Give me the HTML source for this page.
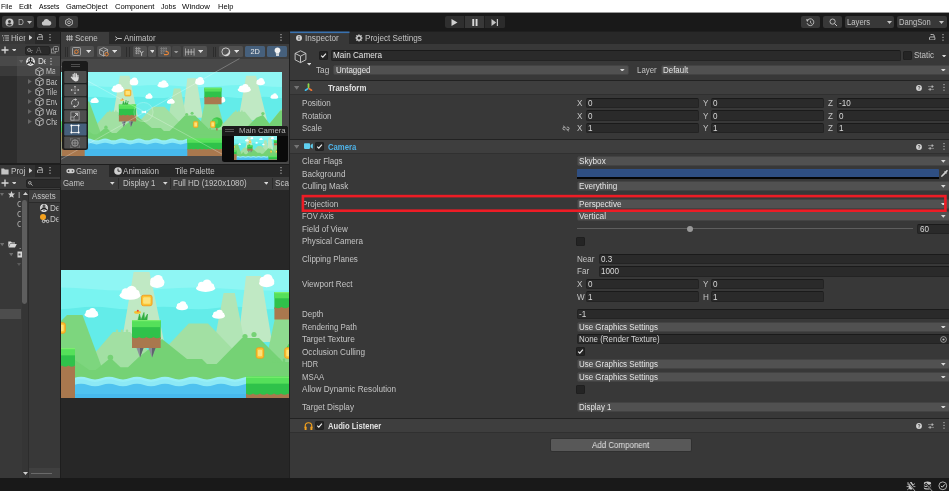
<!DOCTYPE html>
<html><head><meta charset="utf-8"><title>Unity</title>
<style>
html,body{margin:0;padding:0}
body{width:949px;height:491px;overflow:hidden;background:#383838;position:relative;font-family:"Liberation Sans",sans-serif;font-size:8.1px;color:#c4c4c4}
div,span,svg{position:absolute;display:block;box-sizing:border-box}
span{white-space:nowrap;line-height:10px}
.f{background:#2a2a2a;border:1px solid #232323;border-top-color:#1a1a1a;border-radius:2px}
.d{background:#515151;border:1px solid #434343;border-radius:2px}
</style></head><body><div id="app" style="left:0;top:0;width:949px;height:491px;will-change:transform">
<div style="left:0px;top:0px;width:949px;height:12px;background:#ffffff;"></div>
<span style="left:0.6px;top:2px;color:#000;font-size:7.6px;font-weight:400;transform:scaleX(0.923);transform-origin:0 0;">File</span>
<span style="left:19.2px;top:2px;color:#000;font-size:7.6px;font-weight:400;transform:scaleX(0.977);transform-origin:0 0;">Edit</span>
<span style="left:39px;top:2px;color:#000;font-size:7.6px;font-weight:400;transform:scaleX(0.894);transform-origin:0 0;">Assets</span>
<span style="left:66.4px;top:2px;color:#000;font-size:7.6px;font-weight:400;transform:scaleX(0.973);transform-origin:0 0;">GameObject</span>
<span style="left:114.8px;top:2px;color:#000;font-size:7.6px;font-weight:400;transform:scaleX(1.005);transform-origin:0 0;">Component</span>
<span style="left:161px;top:2px;color:#000;font-size:7.6px;font-weight:400;transform:scaleX(0.934);transform-origin:0 0;">Jobs</span>
<span style="left:182.3px;top:2px;color:#000;font-size:7.6px;font-weight:400;transform:scaleX(1.032);transform-origin:0 0;">Window</span>
<span style="left:217.5px;top:2px;color:#000;font-size:7.6px;font-weight:400;transform:scaleX(0.985);transform-origin:0 0;">Help</span>
<div style="left:0px;top:12px;width:949px;height:20px;background:#191919;"></div>
<div style="left:0px;top:12px;width:949px;height:1px;background:#9a9a9a;"></div>
<div style="left:2px;top:16px;width:32px;height:12px;background:#383838;border-radius:2px"></div>
<div style="left:37px;top:16px;width:19px;height:12px;background:#383838;border-radius:2px"></div>
<div style="left:59px;top:16px;width:19px;height:12px;background:#383838;border-radius:2px"></div>
<svg style="left:5px;top:18px;" width="9" height="9" viewBox="0 0 9 9"><circle cx="4.5" cy="4.5" r="4" fill="#c8c8c8"/><circle cx="4.5" cy="3.4" r="1.5" fill="#383838"/><path d="M1.9 7 Q4.5 4.2 7.1 7 Q4.5 8.6 1.9 7Z" fill="#383838"/></svg>
<span style="left:17.5px;top:17px;color:#b0b0b0;font-size:8.5px;font-weight:400;transform:scaleX(0.953);transform-origin:0 0;">D</span>
<svg style="left:27.0px;top:20.8px;" width="5" height="3" viewBox="0 0 5 3"><polygon points="0,0 5,0 2.5,3" fill="#c4c4c4"/></svg>
<svg style="left:41px;top:18px;" width="11" height="8" viewBox="0 0 11 8"><path d="M2.5 7.5 A2.2 2.2 0 0 1 2.6 3.2 A3 3 0 0 1 8.2 2.8 A2.4 2.4 0 0 1 8.6 7.5Z" fill="#c8c8c8"/></svg>
<svg style="left:64.5px;top:18.3px;" width="8" height="8.6" viewBox="0 0 8 8.6"><polygon points="4,0.6 7.3,2.4 7.3,6.2 4,8 0.7,6.2 0.7,2.4" fill="none" stroke="#c8c8c8" stroke-width="0.9"/><circle cx="4" cy="4.3" r="1.4" fill="none" stroke="#c8c8c8" stroke-width="0.8"/></svg>
<div style="left:445px;top:16px;width:59.5px;height:12px;background:#2f2f2f;border-radius:2px"></div>
<div style="left:464.8px;top:16px;width:19.4px;height:12px;background:#383838;"></div>
<div style="left:485px;top:16px;width:19.5px;height:12px;background:#2b2b2b;border-radius:0 2px 2px 0"></div>
<div style="left:464px;top:16px;width:0.8px;height:12px;background:#1e1e1e;"></div>
<div style="left:484.2px;top:16px;width:0.8px;height:12px;background:#1e1e1e;"></div>
<svg style="left:451px;top:18.5px;" width="7" height="7" viewBox="0 0 7 7"><polygon points="0.5,0 6.5,3.5 0.5,7" fill="#d0d0d0"/></svg>
<svg style="left:472px;top:18.5px;" width="6" height="7" viewBox="0 0 6 7"><rect x="0.3" y="0" width="1.9" height="7" fill="#d8d8d8"/><rect x="3.6" y="0" width="1.9" height="7" fill="#d8d8d8"/></svg>
<svg style="left:491px;top:18.5px;" width="8" height="7" viewBox="0 0 8 7"><polygon points="0.5,0 5.2,3.5 0.5,7" fill="#c4c4c4"/><rect x="5.8" y="0" width="1.2" height="7" fill="#c4c4c4"/></svg>
<div style="left:800.5px;top:16px;width:19px;height:12px;background:#383838;border-radius:2px"></div>
<div style="left:822.5px;top:16px;width:19.5px;height:12px;background:#383838;border-radius:2px"></div>
<div style="left:844.5px;top:16px;width:49.5px;height:12px;background:#383838;border-radius:2px"></div>
<div style="left:897px;top:16px;width:49.5px;height:12px;background:#383838;border-radius:2px"></div>
<svg style="left:806px;top:18px;" width="9" height="9" viewBox="0 0 9 9"><path d="M1.6 2.2 A3.4 3.4 0 1 1 1.1 5.2" fill="none" stroke="#c4c4c4" stroke-width="0.9"/><polygon points="0,1.2 3,1.6 1.2,3.9" fill="#c4c4c4"/><path d="M4.5 2.8 V4.7 L5.8 5.5" fill="none" stroke="#c4c4c4" stroke-width="0.8"/></svg>
<svg style="left:828.5px;top:18px;" width="9" height="9" viewBox="0 0 9 9"><circle cx="3.6" cy="3.6" r="2.6" fill="none" stroke="#c4c4c4" stroke-width="0.9"/><path d="M5.6 5.6 L8 8" stroke="#c4c4c4" stroke-width="1"/></svg>
<span style="left:847px;top:17px;color:#c4c4c4;font-size:8.5px;font-weight:400;transform:scaleX(0.909);transform-origin:0 0;">Layers</span>
<svg style="left:886.9px;top:20.8px;" width="5" height="3" viewBox="0 0 5 3"><polygon points="0,0 5,0 2.5,3" fill="#c4c4c4"/></svg>
<span style="left:899px;top:17px;color:#c4c4c4;font-size:8.5px;font-weight:400;transform:scaleX(0.892);transform-origin:0 0;">DangSon</span>
<svg style="left:938.5px;top:20.8px;" width="5" height="3" viewBox="0 0 5 3"><polygon points="0,0 5,0 2.5,3" fill="#c4c4c4"/></svg>
<div style="left:0px;top:31px;width:949px;height:1px;background:#1f1f1f;"></div>
<div style="left:0px;top:32px;width:60px;height:12px;background:#282828;"></div>
<div style="left:0px;top:32px;width:25.5px;height:12px;background:#383838;"></div>
<div style="left:25.2px;top:32px;width:10px;height:12px;background:#323232;"></div>
<svg style="left:1.5px;top:35px;" width="7" height="6" viewBox="0 0 7 6"><path d="M0 0.8H1.2M2.2 0.8H7M1 3H2.2M3.2 3H7M1 5.2H2.2M3.2 5.2H7" stroke="#c4c4c4" stroke-width="0.9"/></svg>
<span style="left:11px;top:33px;color:#c4c4c4;font-size:8.5px;font-weight:400;width:15.01px;overflow:hidden;transform:scaleX(0.953);transform-origin:0 0;">Hierarchy</span>
<svg style="left:28.65px;top:34.8px;" width="3.5" height="5.2" viewBox="0 0 3.5 5.2"><polygon points="0,0 3.5,2.6 0,5.2" fill="#cccccc"/></svg>
<svg style="left:36.8px;top:33.6px;" width="6.4" height="6.6" viewBox="0 0 6.4 6.6"><path d="M5.2 3 V1.9 A1.4 1.4 0 0 0 3.8 0.5 H1.6" fill="none" stroke="#c8c8c8" stroke-width="0.9"/><rect x="0.5" y="3" width="5.4" height="3" rx="0.9" fill="none" stroke="#c8c8c8" stroke-width="0.9"/></svg>
<svg style="left:49.4px;top:33.9px;" width="2" height="7" viewBox="0 0 2 7"><rect x="0.5" y="0" width="1" height="1.2" fill="#c4c4c4"/><rect x="0.5" y="2.8" width="1" height="1.2" fill="#c4c4c4"/><rect x="0.5" y="5.6" width="1" height="1.2" fill="#c4c4c4"/></svg>
<div style="left:0px;top:44px;width:60px;height:12px;background:#3c3c3c;"></div>
<svg style="left:1px;top:46px;" width="8" height="8" viewBox="0 0 8 8"><path d="M4 0.5V7.5M0.5 4H7.5" stroke="#d8d8d8" stroke-width="1.3"/></svg>
<svg style="left:11.5px;top:48.6px;" width="4.6" height="2.8" viewBox="0 0 4.6 2.8"><polygon points="0,0 4.6,0 2.3,2.8" fill="#d0d0d0"/></svg>
<div style="left:24.5px;top:45.5px;width:25px;height:9.5px;background:#2a2a2a;border-radius:2px;border:1px solid #242424"></div>
<svg style="left:27px;top:47.5px;" width="6" height="6" viewBox="0 0 6 6"><circle cx="2" cy="2" r="1.5" fill="none" stroke="#9a9a9a" stroke-width="0.8"/><path d="M3.2 3.2L5 5M4 2.6H5.8" stroke="#9a9a9a" stroke-width="0.7"/></svg>
<span style="left:36px;top:45px;color:#707070;font-size:8.5px;font-weight:400;transform:scaleX(0.953);transform-origin:0 0;">A</span>
<svg style="left:51px;top:46px;" width="8" height="8" viewBox="0 0 8 8"><rect x="0.5" y="3" width="4" height="4" fill="none" stroke="#9a9a9a" stroke-width="0.8"/><rect x="2.5" y="0.5" width="5" height="5" rx="1" fill="#3c3c3c" stroke="#9a9a9a" stroke-width="0.8"/><circle cx="5" cy="3" r="1" fill="#9a9a9a"/></svg>
<div style="left:0px;top:76.3px;width:16.7px;height:86.7px;background:#2d2d2d;"></div>
<div style="left:0px;top:56.3px;width:60px;height:10px;background:#4d4d4d;"></div>
<div style="left:0px;top:56.3px;width:16.7px;height:10px;background:#494949;"></div>
<div style="left:0px;top:66.3px;width:60px;height:10.1px;background:#464646;"></div>
<div style="left:0px;top:66.3px;width:16.7px;height:10.1px;background:#3a3a3a;"></div>
<svg style="left:18.6px;top:59.699999999999996px;" width="4.4" height="3.2" viewBox="0 0 4.4 3.2"><polygon points="0,0 4.4,0 2.2,3.2" fill="#6e6e6e"/></svg>
<svg style="left:26px;top:56.5px;" width="9" height="9" viewBox="0 0 9 9"><circle cx="4.5" cy="4.5" r="4.4" fill="#ececec"/><path d="M4.5 4.5 L4.5 0.6 M4.5 4.5 L1 6.6 M4.5 4.5 L8 6.6" stroke="#222" stroke-width="1.4"/><path d="M2.2 2.2 L6.8 2.2 M2 3 L4.3 7.6 M7 3 L4.7 7.6" stroke="#222" stroke-width="0.7"/></svg>
<span style="left:37.5px;top:56px;color:#e0e0e0;font-size:8.5px;font-weight:400;width:8.4px;overflow:hidden;transform:scaleX(0.953);transform-origin:0 0;">De</span>
<svg style="left:50.3px;top:57.800000000000004px;" width="2" height="7" viewBox="0 0 2 7"><rect x="0.5" y="0" width="1" height="1.2" fill="#d0d0d0"/><rect x="0.5" y="2.8" width="1" height="1.2" fill="#d0d0d0"/><rect x="0.5" y="5.6" width="1" height="1.2" fill="#d0d0d0"/></svg>
<svg style="left:35px;top:66.6px;" width="9" height="9.5" viewBox="0 0 9 9.5"><path d="M4.5 0.6 L8.2 2.5 V6.8 L4.5 8.8 L0.8 6.8 V2.5Z M0.8 2.5 L4.5 4.5 L8.2 2.5 M4.5 4.5 V8.8" fill="none" stroke="#c8c8c8" stroke-width="0.8" stroke-linejoin="round"/></svg>
<span style="left:45.6px;top:66px;color:#c4c4c4;font-size:8.5px;font-weight:400;width:10.9px;overflow:hidden;transform:scaleX(0.8386);transform-origin:0 0;">Main Camera</span>
<svg style="left:35px;top:76.64999999999999px;" width="9" height="9.5" viewBox="0 0 9 9.5"><path d="M4.5 0.6 L8.2 2.5 V6.8 L4.5 8.8 L0.8 6.8 V2.5Z M0.8 2.5 L4.5 4.5 L8.2 2.5 M4.5 4.5 V8.8" fill="none" stroke="#c8c8c8" stroke-width="0.8" stroke-linejoin="round"/></svg>
<span style="left:45.6px;top:77px;color:#c4c4c4;font-size:8.5px;font-weight:400;width:12.8px;overflow:hidden;transform:scaleX(0.8386);transform-origin:0 0;">Background</span>
<svg style="left:27.900000000000002px;top:78.85px;" width="3.8" height="5" viewBox="0 0 3.8 5"><polygon points="0,0 3.8,2.5 0,5" fill="#686868"/></svg>
<svg style="left:35px;top:86.7px;" width="9" height="9.5" viewBox="0 0 9 9.5"><path d="M4.5 0.6 L8.2 2.5 V6.8 L4.5 8.8 L0.8 6.8 V2.5Z M0.8 2.5 L4.5 4.5 L8.2 2.5 M4.5 4.5 V8.8" fill="none" stroke="#c8c8c8" stroke-width="0.8" stroke-linejoin="round"/></svg>
<span style="left:45.6px;top:87px;color:#c4c4c4;font-size:8.5px;font-weight:400;width:12.8px;overflow:hidden;transform:scaleX(0.8386);transform-origin:0 0;">Tilemap</span>
<svg style="left:27.900000000000002px;top:88.9px;" width="3.8" height="5" viewBox="0 0 3.8 5"><polygon points="0,0 3.8,2.5 0,5" fill="#686868"/></svg>
<svg style="left:35px;top:96.75px;" width="9" height="9.5" viewBox="0 0 9 9.5"><path d="M4.5 0.6 L8.2 2.5 V6.8 L4.5 8.8 L0.8 6.8 V2.5Z M0.8 2.5 L4.5 4.5 L8.2 2.5 M4.5 4.5 V8.8" fill="none" stroke="#c8c8c8" stroke-width="0.8" stroke-linejoin="round"/></svg>
<span style="left:45.6px;top:97px;color:#c4c4c4;font-size:8.5px;font-weight:400;width:12.8px;overflow:hidden;transform:scaleX(0.8386);transform-origin:0 0;">Environment</span>
<svg style="left:27.900000000000002px;top:98.95px;" width="3.8" height="5" viewBox="0 0 3.8 5"><polygon points="0,0 3.8,2.5 0,5" fill="#686868"/></svg>
<svg style="left:35px;top:106.8px;" width="9" height="9.5" viewBox="0 0 9 9.5"><path d="M4.5 0.6 L8.2 2.5 V6.8 L4.5 8.8 L0.8 6.8 V2.5Z M0.8 2.5 L4.5 4.5 L8.2 2.5 M4.5 4.5 V8.8" fill="none" stroke="#c8c8c8" stroke-width="0.8" stroke-linejoin="round"/></svg>
<span style="left:45.6px;top:107px;color:#c4c4c4;font-size:8.5px;font-weight:400;width:12.8px;overflow:hidden;transform:scaleX(0.8386);transform-origin:0 0;">Water</span>
<svg style="left:27.900000000000002px;top:109.0px;" width="3.8" height="5" viewBox="0 0 3.8 5"><polygon points="0,0 3.8,2.5 0,5" fill="#686868"/></svg>
<svg style="left:35px;top:116.85px;" width="9" height="9.5" viewBox="0 0 9 9.5"><path d="M4.5 0.6 L8.2 2.5 V6.8 L4.5 8.8 L0.8 6.8 V2.5Z M0.8 2.5 L4.5 4.5 L8.2 2.5 M4.5 4.5 V8.8" fill="none" stroke="#c8c8c8" stroke-width="0.8" stroke-linejoin="round"/></svg>
<span style="left:45.6px;top:117px;color:#c4c4c4;font-size:8.5px;font-weight:400;width:12.8px;overflow:hidden;transform:scaleX(0.8386);transform-origin:0 0;">Character</span>
<svg style="left:27.900000000000002px;top:119.05px;" width="3.8" height="5" viewBox="0 0 3.8 5"><polygon points="0,0 3.8,2.5 0,5" fill="#686868"/></svg>
<div style="left:59.5px;top:32px;width:1.5px;height:446px;background:#1e1e1e;"></div>
<div style="left:0px;top:163.3px;width:59.5px;height:1.7px;background:#1e1e1e;"></div>
<div style="left:61px;top:164px;width:227.7px;height:1px;background:#1e1e1e;"></div>
<div style="left:0px;top:165px;width:60px;height:12px;background:#282828;"></div>
<div style="left:0px;top:165px;width:25.5px;height:12px;background:#383838;"></div>
<div style="left:25.2px;top:165px;width:10px;height:12px;background:#323232;"></div>
<svg style="left:1px;top:167.5px;" width="8" height="7" viewBox="0 0 8 7"><path d="M0.3 0.6 H3 L3.8 1.6 H7.6 V6.6 H0.3Z" fill="#c4c4c4"/></svg>
<span style="left:11px;top:166px;color:#c4c4c4;font-size:8.5px;font-weight:400;width:15.01px;overflow:hidden;transform:scaleX(0.953);transform-origin:0 0;">Project</span>
<svg style="left:28.65px;top:167.8px;" width="3.5" height="5.2" viewBox="0 0 3.5 5.2"><polygon points="0,0 3.5,2.6 0,5.2" fill="#cccccc"/></svg>
<svg style="left:36.8px;top:166.6px;" width="6.4" height="6.6" viewBox="0 0 6.4 6.6"><path d="M5.2 3 V1.9 A1.4 1.4 0 0 0 3.8 0.5 H1.6" fill="none" stroke="#c8c8c8" stroke-width="0.9"/><rect x="0.5" y="3" width="5.4" height="3" rx="0.9" fill="none" stroke="#c8c8c8" stroke-width="0.9"/></svg>
<svg style="left:49.4px;top:166.9px;" width="2" height="7" viewBox="0 0 2 7"><rect x="0.5" y="0" width="1" height="1.2" fill="#c4c4c4"/><rect x="0.5" y="2.8" width="1" height="1.2" fill="#c4c4c4"/><rect x="0.5" y="5.6" width="1" height="1.2" fill="#c4c4c4"/></svg>
<div style="left:0px;top:177px;width:60px;height:12px;background:#3c3c3c;"></div>
<svg style="left:1px;top:179px;" width="8" height="8" viewBox="0 0 8 8"><path d="M4 0.5V7.5M0.5 4H7.5" stroke="#d8d8d8" stroke-width="1.3"/></svg>
<svg style="left:11.5px;top:181.6px;" width="4.6" height="2.8" viewBox="0 0 4.6 2.8"><polygon points="0,0 4.6,0 2.3,2.8" fill="#d0d0d0"/></svg>
<div style="left:25.5px;top:178.5px;width:36px;height:9.5px;background:#2a2a2a;border-radius:2px;border:1px solid #242424"></div>
<svg style="left:28px;top:181px;" width="5" height="5" viewBox="0 0 5 5"><circle cx="1.8" cy="1.8" r="1.3" fill="none" stroke="#c4c4c4" stroke-width="0.8"/><path d="M2.8 2.8L4.6 4.6" stroke="#c4c4c4" stroke-width="0.8"/></svg>
<div style="left:0px;top:189px;width:60px;height:1px;background:#232323;"></div>
<div style="left:0px;top:190px;width:22px;height:288px;background:#383838;"></div>
<svg style="left:-0.5px;top:192.7px;" width="4" height="3" viewBox="0 0 4 3"><polygon points="0,0 4,0 2.0,3" fill="#6e6e6e"/></svg>
<svg style="left:8px;top:190.5px;" width="7" height="7" viewBox="0 0 7 7"><polygon points="3.5,0 4.5,2.4 7,2.6 5.1,4.3 5.7,6.8 3.5,5.4 1.3,6.8 1.9,4.3 0,2.6 2.5,2.4" fill="#d0d0d0"/></svg>
<span style="left:18px;top:190px;color:#c4c4c4;font-size:8.5px;font-weight:400;width:3.15px;overflow:hidden;transform:scaleX(0.953);transform-origin:0 0;">I</span>
<span style="left:17px;top:199px;color:#b0b0b0;font-size:8.5px;font-weight:400;width:4.2px;overflow:hidden;transform:scaleX(0.953);transform-origin:0 0;">C</span>
<span style="left:17px;top:209px;color:#b0b0b0;font-size:8.5px;font-weight:400;width:4.2px;overflow:hidden;transform:scaleX(0.953);transform-origin:0 0;">C</span>
<span style="left:17px;top:219px;color:#b0b0b0;font-size:8.5px;font-weight:400;width:4.2px;overflow:hidden;transform:scaleX(0.953);transform-origin:0 0;">C</span>
<svg style="left:-0.20000000000000018px;top:242.9px;" width="4.4" height="3.2" viewBox="0 0 4.4 3.2"><polygon points="0,0 4.4,0 2.2,3.2" fill="#6e6e6e"/></svg>
<svg style="left:8px;top:241px;" width="9" height="7" viewBox="0 0 9 7"><path d="M0.3 0.5 H3 L3.8 1.5 H7 V2.5 H2 L0.3 6.5Z M2.3 3 H8.8 L7 6.5 H0.6Z" fill="#d8d8d8"/></svg>
<span style="left:19px;top:241px;color:#c4c4c4;font-size:8.5px;font-weight:400;transform:scaleX(0.953);transform-origin:0 0;">.</span>
<svg style="left:8.8px;top:253.20000000000002px;" width="4.4" height="3.2" viewBox="0 0 4.4 3.2"><polygon points="0,0 4.4,0 2.2,3.2" fill="#6e6e6e"/></svg>
<svg style="left:17px;top:251px;" width="5" height="7" viewBox="0 0 5 7"><rect x="0.5" y="0.5" width="5" height="6" fill="#d8d8d8"/><rect x="1.5" y="2.5" width="2" height="2" fill="#555"/></svg>
<svg style="left:17.0px;top:263.1px;" width="4" height="3" viewBox="0 0 4 3"><polygon points="0,0 4,0 2.0,3" fill="#5a5a5a"/></svg>
<div style="left:0px;top:309px;width:21px;height:10px;background:#4d4d4d;"></div>
<div style="left:22px;top:190px;width:6px;height:288px;background:#353535;"></div>
<svg style="left:22.5px;top:192px;" width="5" height="3" viewBox="0 0 5 3"><polygon points="0,3 5,3 2.5,0" fill="#d0d0d0"/></svg>
<div style="left:22.3px;top:199.5px;width:4.8px;height:104px;background:#5e5e5e;border-radius:2.4px"></div>
<svg style="left:23px;top:472px;" width="5" height="3" viewBox="0 0 5 3"><polygon points="0,0 5,0 2.5,3" fill="#d0d0d0"/></svg>
<div style="left:28px;top:190px;width:1px;height:288px;background:#2c2c2c;"></div>
<div style="left:29px;top:190px;width:31px;height:11.5px;background:#3e3e3e;"></div>
<span style="left:31.5px;top:191px;color:#c4c4c4;font-size:8.5px;font-weight:400;transform:scaleX(0.925);transform-origin:0 0;">Assets</span>
<div style="left:29px;top:201.5px;width:31px;height:0.8px;background:#2a2a2a;"></div>
<svg style="left:40px;top:203.5px;" width="8" height="8" viewBox="0 0 9 9"><circle cx="4.5" cy="4.5" r="4.4" fill="#ececec"/><path d="M4.5 4.5 L4.5 0.6 M4.5 4.5 L1 6.6 M4.5 4.5 L8 6.6" stroke="#222" stroke-width="1.4"/><path d="M2.2 2.2 L6.8 2.2 M2 3 L4.3 7.6 M7 3 L4.7 7.6" stroke="#222" stroke-width="0.7"/></svg>
<span style="left:50px;top:203px;color:#c4c4c4;font-size:8.5px;font-weight:400;width:9.44px;overflow:hidden;transform:scaleX(0.953);transform-origin:0 0;">De</span>
<svg style="left:39.5px;top:213.5px;" width="10" height="10" viewBox="0 0 10 10"><circle cx="3" cy="3" r="3" fill="#f5a21d"/><circle cx="3.6" cy="7.3" r="1.3" fill="none" stroke="#e4e4e4" stroke-width="0.8"/><circle cx="7.6" cy="7.3" r="1.3" fill="none" stroke="#e4e4e4" stroke-width="0.8"/><path d="M4.6 6.6 H6.6" stroke="#e4e4e4" stroke-width="0.8"/></svg>
<span style="left:50px;top:214px;color:#c4c4c4;font-size:8.5px;font-weight:400;width:9.44px;overflow:hidden;transform:scaleX(0.953);transform-origin:0 0;">De</span>
<div style="left:29px;top:468px;width:31px;height:10px;background:#404040;"></div>
<div style="left:31px;top:473.3px;width:21px;height:1px;background:#6a6a6a;"></div>
<div style="left:0px;top:478px;width:949px;height:13px;background:#191919;"></div>
<div style="left:61px;top:32px;width:227.7px;height:12px;background:#282828;"></div>
<div style="left:61px;top:32px;width:48px;height:12px;background:#3c3c3c;"></div>
<svg style="left:66px;top:35px;" width="7" height="6" viewBox="0 0 7 6"><path d="M0 1.5H7M0 3H7M0 4.5H7M1.5 0V6M3.5 0V6M5.5 0V6" stroke="#c4c4c4" stroke-width="0.6"/></svg>
<span style="left:75px;top:33px;color:#c4c4c4;font-size:8.5px;font-weight:400;transform:scaleX(0.946);transform-origin:0 0;">Scene</span>
<svg style="left:115px;top:35.5px;" width="7" height="5" viewBox="0 0 7 5"><path d="M0.3 0.6 L2.6 2.5 L0.3 4.4 M2.6 2.5 H6.8" fill="none" stroke="#c4c4c4" stroke-width="1"/></svg>
<span style="left:123.5px;top:33px;color:#c4c4c4;font-size:8.5px;font-weight:400;transform:scaleX(0.929);transform-origin:0 0;">Animator</span>
<svg style="left:279.6px;top:34.4px;" width="2" height="7" viewBox="0 0 2 7"><rect x="0.5" y="0" width="1" height="1.2" fill="#c4c4c4"/><rect x="0.5" y="2.8" width="1" height="1.2" fill="#c4c4c4"/><rect x="0.5" y="5.6" width="1" height="1.2" fill="#c4c4c4"/></svg>
<div style="left:61px;top:44px;width:227.7px;height:14.5px;background:#3c3c3c;"></div>
<div style="left:64.6px;top:46.5px;width:0.8px;height:10.3px;background:#2c2c2c;"></div>
<div style="left:66.8px;top:46.5px;width:0.8px;height:10.3px;background:#2c2c2c;"></div>
<div style="left:70px;top:45.8px;width:24.3px;height:11.7px;background:#515151;border-radius:1.5px"></div>
<svg style="left:72.3px;top:47.3px;" width="9" height="9" viewBox="0 0 9 9"><rect x="0.5" y="0.5" width="8" height="8" rx="1" fill="none" stroke="#b4b4b4" stroke-width="0.8"/><path d="M1.6 7.4 L7.4 1.6" stroke="#a0a0a0" stroke-width="0.6"/><circle cx="4.4" cy="4.7" r="1.8" fill="#515151" stroke="#e5853a" stroke-width="1"/></svg>
<svg style="left:85.60000000000001px;top:50.400000000000006px;" width="5.2" height="3" viewBox="0 0 5.2 3"><polygon points="0,0 5.2,0 2.6,3" fill="#e0e0e0"/></svg>
<div style="left:96.7px;top:45.8px;width:24px;height:11.7px;background:#515151;border-radius:1.5px"></div>
<svg style="left:98.6px;top:46.8px;" width="11" height="10" viewBox="0 0 11 10"><path d="M4.6 0.7 L8.6 2.5 V6.9 L4.6 9 L0.6 6.9 V2.5Z M0.6 2.5 L4.6 4.5 L8.6 2.5 M4.6 4.5 V9" fill="none" stroke="#bcbcbc" stroke-width="0.8" stroke-linejoin="round"/><circle cx="7.6" cy="7.2" r="1.7" fill="#515151" stroke="#e5853a" stroke-width="1"/></svg>
<svg style="left:112.0px;top:50.400000000000006px;" width="5.2" height="3" viewBox="0 0 5.2 3"><polygon points="0,0 5.2,0 2.6,3" fill="#e0e0e0"/></svg>
<div style="left:126.4px;top:46.5px;width:0.8px;height:10.3px;background:#2c2c2c;"></div>
<div style="left:128.8px;top:46.5px;width:0.8px;height:10.3px;background:#2c2c2c;"></div>
<div style="left:133.4px;top:45.8px;width:13.3px;height:11.7px;background:#515151;border-radius:1.5px"></div>
<div style="left:147.7px;top:45.8px;width:8.5px;height:11.7px;background:#515151;border-radius:1.5px"></div>
<svg style="left:135.3px;top:47.4px;" width="10" height="9" viewBox="0 0 10 9"><path d="M0.3 1.6H5.5M0.3 3.8H5.5M0.3 6H3.4M1.6 0.2V7.2M3.8 0.2V7.2" stroke="#c4c4c4" stroke-width="0.7" stroke-dasharray="1.4 0.5"/><path d="M5 4 L6.6 6.2 L8.4 4 M6.6 6.2 V8.8" stroke="#e0e0e0" stroke-width="0.8" fill="none"/></svg>
<svg style="left:149.6px;top:50.45px;" width="4.8" height="2.9" viewBox="0 0 4.8 2.9"><polygon points="0,0 4.8,0 2.4,2.9" fill="#e0e0e0"/></svg>
<div style="left:158.1px;top:45.8px;width:13.3px;height:11.7px;background:#515151;border-radius:1.5px"></div>
<div style="left:172.4px;top:45.8px;width:8.4px;height:11.7px;background:#464646;border-radius:1.5px"></div>
<svg style="left:160px;top:47.4px;" width="10" height="9" viewBox="0 0 10 9"><path d="M0.3 1.6H7M0.3 3.8H7M0.3 6H3M1.6 0.2V7.2M3.8 0.2V7.2M6 0.2V3.8" stroke="#a0a0a0" stroke-width="0.6" stroke-dasharray="1.4 0.5"/><path d="M4 7.6 H7 A1.5 1.5 0 0 0 7 4.6 H5.6" stroke="#e5853a" stroke-width="1.1" fill="none"/></svg>
<svg style="left:174.4px;top:50.550000000000004px;" width="4.4" height="2.7" viewBox="0 0 4.4 2.7"><polygon points="0,0 4.4,0 2.2,2.7" fill="#9a9a9a"/></svg>
<div style="left:183px;top:45.8px;width:24.1px;height:11.7px;background:#515151;border-radius:1.5px"></div>
<svg style="left:185.2px;top:47.6px;" width="10" height="8" viewBox="0 0 10 8"><path d="M0.4 0.4V7.6M3.3 1V7M6.2 1V7M9.1 0.4V7.6M0.4 4H9.1" stroke="#c8c8c8" stroke-width="0.7" fill="none"/></svg>
<svg style="left:198.20000000000002px;top:50.400000000000006px;" width="5.2" height="3" viewBox="0 0 5.2 3"><polygon points="0,0 5.2,0 2.6,3" fill="#e0e0e0"/></svg>
<div style="left:212.6px;top:46.5px;width:0.8px;height:10.3px;background:#2c2c2c;"></div>
<div style="left:215px;top:46.5px;width:0.8px;height:10.3px;background:#2c2c2c;"></div>
<div style="left:218.9px;top:45.8px;width:24px;height:11.7px;background:#515151;border-radius:1.5px"></div>
<svg style="left:221px;top:46.9px;" width="10" height="10" viewBox="0 0 10 10"><circle cx="4.8" cy="4.8" r="3.9" fill="none" stroke="#d4d4d4" stroke-width="0.9"/><path d="M7.9 2.6 A3.5 3.5 0 0 1 2.6 7.9 A4.6 4.6 0 0 0 7.9 2.6Z" fill="#d4d4d4"/></svg>
<svg style="left:234.0px;top:50.400000000000006px;" width="5.2" height="3" viewBox="0 0 5.2 3"><polygon points="0,0 5.2,0 2.6,3" fill="#e0e0e0"/></svg>
<div style="left:244.9px;top:45.8px;width:20.2px;height:11.7px;background:#46607c;border-radius:1.5px"></div>
<span style="left:250.6px;top:47px;color:#eaeaea;font-size:7.4px;font-weight:400;letter-spacing:-0.2px;">2D</span>
<div style="left:266.8px;top:45.8px;width:20.2px;height:11.7px;background:#46607c;border-radius:1.5px"></div>
<svg style="left:273.6px;top:47px;" width="7" height="10" viewBox="0 0 7 10"><path d="M3.5 0.4 A2.9 2.9 0 0 1 5.2 5.7 V6.7 H1.8 V5.7 A2.9 2.9 0 0 1 3.5 0.4Z" fill="#f0f0f0"/><rect x="2" y="7.2" width="3" height="1.6" fill="#f0f0f0"/></svg>
<div style="left:61px;top:58.5px;width:227.7px;height:105.3px;background:#484848;"></div>
<svg style="left:61px;top:72px" width="221" height="83.5" viewBox="-25.50 -4.33 368.33 139.17" preserveAspectRatio="none"><use href="#w"/></svg><svg style="left:61px;top:56px" width="228.5" height="107" viewBox="61 56 228.5 107"><g stroke="#ffffff" stroke-width="0.6" opacity="0.45" fill="none"><path d="M239.4 58.6 L61 159.3"/><path d="M61 66.5 L234 160.6"/></g><circle cx="143.5" cy="112" r="9.6" fill="#ffffff" fill-opacity="0.12" stroke="#fff" stroke-width="0.5" opacity="0.5"/><path d="M141.6 111.2 h3 l1.4 -0.8 v3.2 l-1.4 -0.8 h-3z" fill="#fff"/></svg>
<div style="left:62px;top:61px;width:26.2px;height:89.3px;background:#1a1a1a;border-radius:2.5px;opacity:0.97"></div>
<div style="left:71px;top:64px;width:9px;height:1px;background:#4e4e4e;"></div>
<div style="left:71px;top:66px;width:9px;height:1px;background:#4e4e4e;"></div>
<svg style="left:64px;top:71px;" width="23" height="80" viewBox="0 0 23 80"><rect x="0.2" y="0.05" width="22.3" height="12" rx="0.8" fill="#4e4e4e"/></svg>
<svg style="left:70.4px;top:72.05px;" width="10" height="10" viewBox="0 0 10 10"><g stroke="#dcdcdc" stroke-linecap="round" stroke-width="1.2" fill="none"><path d="M3.2 5.6V2.3M4.8 5.5V1.3M6.4 5.6V1.9M7.9 6V3.3M1.3 5.1L3 7"/></g><path d="M2.6 5.2H8.5V6.8Q8.5 9.4 5.6 9.4Q3.6 9.4 2.6 7Z" fill="#dcdcdc"/></svg>
<svg style="left:64px;top:71px;" width="23" height="80" viewBox="0 0 23 80"><rect x="0.2" y="13.15" width="22.3" height="12" rx="0.8" fill="#4e4e4e"/></svg>
<svg style="left:70.4px;top:85.14999999999999px;" width="10" height="10" viewBox="0 0 10 10"><path d="M5 1.4V8.6M1.4 5H8.6" stroke="#b8b8b8" stroke-width="0.7" stroke-dasharray="1 0.9"/><path d="M3.8 2.2L5 0.7L6.2 2.2ZM3.8 7.8L5 9.3L6.2 7.8ZM2.2 3.8L0.7 5L2.2 6.2ZM7.8 3.8L9.3 5L7.8 6.2Z" fill="#cfcfcf"/></svg>
<svg style="left:64px;top:71px;" width="23" height="80" viewBox="0 0 23 80"><rect x="0.2" y="26.25" width="22.3" height="12" rx="0.8" fill="#4e4e4e"/></svg>
<svg style="left:70.4px;top:98.25px;" width="10" height="10" viewBox="0 0 10 10"><path d="M1.9 6.6A3.6 3.6 0 0 1 5.6 1.4M8.1 3.4A3.6 3.6 0 0 1 4.4 8.6" stroke="#c8c8c8" stroke-width="0.9" fill="none"/><path d="M5 0.2L7.2 1.5L5.2 2.9ZM5 9.8L2.8 8.5L4.8 7.1Z" fill="#c8c8c8"/></svg>
<svg style="left:64px;top:71px;" width="23" height="80" viewBox="0 0 23 80"><rect x="0.2" y="39.35" width="22.3" height="12" rx="0.8" fill="#4e4e4e"/></svg>
<svg style="left:70.4px;top:111.35px;" width="10" height="10" viewBox="0 0 10 10"><rect x="0.9" y="0.9" width="8.2" height="8.2" fill="none" stroke="#b4b4b4" stroke-width="0.7"/><rect x="0.9" y="6" width="3.1" height="3.1" fill="#4e4e4e" stroke="#b4b4b4" stroke-width="0.7"/><path d="M4.2 5.8L7.4 2.6M5 2.4H7.6V5" stroke="#d0d0d0" stroke-width="0.9" fill="none"/></svg>
<svg style="left:64px;top:71px;" width="23" height="80" viewBox="0 0 23 80"><rect x="0.2" y="52.45" width="22.3" height="12" rx="0.8" fill="#46607c"/></svg>
<svg style="left:70.4px;top:124.44999999999999px;" width="10" height="10" viewBox="0 0 10 10"><rect x="1.4" y="1.4" width="7.2" height="7.2" fill="none" stroke="#f0f0f0" stroke-width="0.9"/><circle cx="1.4" cy="1.4" r="1" fill="#fff"/><circle cx="8.6" cy="1.4" r="1" fill="#fff"/><circle cx="1.4" cy="8.6" r="1" fill="#fff"/><circle cx="8.6" cy="8.6" r="1" fill="#fff"/></svg>
<svg style="left:64px;top:71px;" width="23" height="80" viewBox="0 0 23 80"><rect x="0.2" y="65.55" width="22.3" height="12" rx="0.8" fill="#4e4e4e"/></svg>
<svg style="left:70.4px;top:137.55px;" width="10" height="10" viewBox="0 0 10 10"><circle cx="5" cy="5" r="3.2" fill="none" stroke="#b4b4b4" stroke-width="0.7"/><path d="M5 1.8V8.2M1.8 5H8.2" stroke="#b4b4b4" stroke-width="0.6"/><path d="M0.6 2.4V0.6H2.4M7.6 0.6H9.4V2.4M9.4 7.6V9.4H7.6M2.4 9.4H0.6V7.6" stroke="#b4b4b4" stroke-width="0.6" fill="none" stroke-dasharray="1 0.6"/></svg>
<div style="left:222px;top:126px;width:65.5px;height:35.5px;background:#0a0a0a;border-radius:2.5px"></div>
<div style="left:222px;top:126px;width:65.5px;height:10px;background:#1b1b1b;border-radius:2.5px 2.5px 0 0"></div>
<div style="left:225px;top:129.3px;width:9px;height:0.8px;background:#555;"></div>
<div style="left:225px;top:131.3px;width:9px;height:0.8px;background:#555;"></div>
<span style="left:238.9px;top:126px;color:#b4b4b4;font-size:7.8px;font-weight:400;">Main Camera</span>
<svg style="left:234px;top:136px" width="42.5" height="24" viewBox="0 0 228 128" preserveAspectRatio="none"><use href="#w"/></svg>
<div style="left:61px;top:165px;width:227.7px;height:12px;background:#282828;"></div>
<div style="left:61px;top:165px;width:48px;height:12px;background:#3c3c3c;"></div>
<svg style="left:65.5px;top:168px;" width="9" height="6" viewBox="0 0 9 6"><rect x="0.3" y="0.8" width="8.4" height="4.4" rx="2.2" fill="#d0d0d0"/><circle cx="2.6" cy="3" r="0.9" fill="#3c3c3c"/><circle cx="6.4" cy="3" r="0.8" fill="#3c3c3c"/></svg>
<span style="left:75.8px;top:166px;color:#c4c4c4;font-size:8.5px;font-weight:400;transform:scaleX(0.920);transform-origin:0 0;">Game</span>
<svg style="left:113.5px;top:167px;" width="8" height="8" viewBox="0 0 8 8"><circle cx="4" cy="4" r="3.8" fill="#d0d0d0"/><path d="M4 1.6V4.2H6.4" stroke="#282828" stroke-width="0.9" fill="none"/></svg>
<span style="left:122.6px;top:166px;color:#c4c4c4;font-size:8.5px;font-weight:400;transform:scaleX(0.950);transform-origin:0 0;">Animation</span>
<span style="left:174.9px;top:166px;color:#c4c4c4;font-size:8.5px;font-weight:400;transform:scaleX(0.941);transform-origin:0 0;">Tile Palette</span>
<svg style="left:279.6px;top:167.4px;" width="2" height="7" viewBox="0 0 2 7"><rect x="0.5" y="0" width="1" height="1.2" fill="#c4c4c4"/><rect x="0.5" y="2.8" width="1" height="1.2" fill="#c4c4c4"/><rect x="0.5" y="5.6" width="1" height="1.2" fill="#c4c4c4"/></svg>
<div style="left:61px;top:177px;width:227.7px;height:12.5px;background:#3c3c3c;"></div>
<span style="left:63.3px;top:178px;color:#c4c4c4;font-size:8.5px;font-weight:400;transform:scaleX(0.920);transform-origin:0 0;">Game</span>
<svg style="left:110.2px;top:181.9px;" width="4.6" height="2.8" viewBox="0 0 4.6 2.8"><polygon points="0,0 4.6,0 2.3,2.8" fill="#d8d8d8"/></svg>
<div style="left:118px;top:178px;width:1px;height:11px;background:#2c2c2c;"></div>
<span style="left:122.6px;top:178px;color:#c4c4c4;font-size:8.5px;font-weight:400;transform:scaleX(0.927);transform-origin:0 0;">Display 1</span>
<svg style="left:163.2px;top:181.9px;" width="4.6" height="2.8" viewBox="0 0 4.6 2.8"><polygon points="0,0 4.6,0 2.3,2.8" fill="#d8d8d8"/></svg>
<div style="left:170px;top:178px;width:0.7px;height:11px;background:#2c2c2c;"></div>
<span style="left:172.8px;top:178px;color:#c4c4c4;font-size:8.5px;font-weight:400;transform:scaleX(0.939);transform-origin:0 0;">Full HD (1920x1080)</span>
<svg style="left:263.7px;top:181.9px;" width="4.6" height="2.8" viewBox="0 0 4.6 2.8"><polygon points="0,0 4.6,0 2.3,2.8" fill="#d8d8d8"/></svg>
<div style="left:271.5px;top:178px;width:0.7px;height:11px;background:#2c2c2c;"></div>
<span style="left:274.9px;top:178px;color:#c4c4c4;font-size:8.5px;font-weight:400;width:14.69px;overflow:hidden;transform:scaleX(0.953);transform-origin:0 0;">Scale</span>
<div style="left:61px;top:189.5px;width:227.7px;height:288.5px;background:#272727;"></div>
<svg style="left:61px;top:270px" width="228" height="128" viewBox="0 0 228 128"><defs><g id="w"><rect x="-40" y="-12" width="420" height="165" fill="#8ff6f4"/><path d="M-40 150 V19 q35.0 -3.2 70.0 0 q35.0 3.2 70.0 0 q35.0 -3.2 70.0 0 q35.0 3.2 70.0 0 q35.0 -3.2 70.0 0 q35.0 3.2 70.0 0 V150Z" fill="#79f4f1"/><path d="M-55 150 V38 q17.5 -2.4 35.0 0 q17.5 2.4 35.0 0 q17.5 -2.4 35.0 0 q17.5 2.4 35.0 0 q17.5 -2.4 35.0 0 q17.5 2.4 35.0 0 q17.5 -2.4 35.0 0 q17.5 2.4 35.0 0 q17.5 -2.4 35.0 0 q17.5 2.4 35.0 0 q17.5 -2.4 35.0 0 q17.5 2.4 35.0 0 q17.5 -2.4 35.0 0 V150Z" fill="#63ece9"/><polygon points="72.6,2 88.5,2 104,76 60,76" fill="#c0e9c4"/><polygon points="185,6 200,6 211,72 177,72" fill="#c0e9c4"/><polygon points="283,2 299.5,2 318,76 270,76" fill="#c0e9c4"/><polygon points="162.6,23 173.8,23 186,84 151,84" fill="#b2e5b6"/><polygon points="214,48 236,48 250,100 203,100" fill="#8edb90"/><ellipse cx="69" cy="25.45" rx="10.5" ry="4.2" fill="#fff"/><circle cx="64.8" cy="22.65" r="4.34" fill="#fff"/><circle cx="70.575" cy="20.9" r="5.25" fill="#fff"/><circle cx="74.775" cy="23.7" r="3.8500000000000005" fill="#fff"/><ellipse cx="96" cy="13.975" rx="7.0" ry="3.9" fill="#fff"/><circle cx="93.2" cy="11.375" r="4.03" fill="#fff"/><circle cx="97.05" cy="9.75" r="4.875" fill="#fff"/><circle cx="99.85" cy="12.35" r="3.575" fill="#fff"/><ellipse cx="144.6" cy="18.1875" rx="9.5" ry="3.75" fill="#fff"/><circle cx="140.79999999999998" cy="15.6875" r="3.875" fill="#fff"/><circle cx="146.025" cy="14.125" r="4.6875" fill="#fff"/><circle cx="149.825" cy="16.625" r="3.4375000000000004" fill="#fff"/><ellipse cx="205.6" cy="13.275" rx="7.5" ry="3.9" fill="#fff"/><circle cx="202.6" cy="10.675" r="4.03" fill="#fff"/><circle cx="206.725" cy="9.05" r="4.875" fill="#fff"/><circle cx="209.725" cy="11.65" r="3.575" fill="#fff"/><ellipse cx="30.4" cy="44.6625" rx="7.0" ry="2.85" fill="#fff"/><circle cx="27.599999999999998" cy="42.7625" r="2.945" fill="#fff"/><circle cx="31.45" cy="41.575" r="3.5625" fill="#fff"/><circle cx="34.25" cy="43.475" r="2.6125000000000003" fill="#fff"/><ellipse cx="121" cy="37.575" rx="6.0" ry="2.6999999999999997" fill="#fff"/><circle cx="118.6" cy="35.775" r="2.79" fill="#fff"/><circle cx="121.9" cy="34.65" r="3.375" fill="#fff"/><circle cx="124.3" cy="36.45" r="2.475" fill="#fff"/><ellipse cx="157.5" cy="46.075" rx="6.5" ry="2.6999999999999997" fill="#fff"/><circle cx="154.9" cy="44.275" r="2.79" fill="#fff"/><circle cx="158.475" cy="43.15" r="3.375" fill="#fff"/><circle cx="161.075" cy="44.95" r="2.475" fill="#fff"/><ellipse cx="280" cy="25.45" rx="11.0" ry="4.2" fill="#fff"/><circle cx="275.6" cy="22.65" r="4.34" fill="#fff"/><circle cx="281.65" cy="20.9" r="5.25" fill="#fff"/><circle cx="286.05" cy="23.7" r="3.8500000000000005" fill="#fff"/><ellipse cx="307" cy="14.1" rx="7.0" ry="3.5999999999999996" fill="#fff"/><circle cx="304.2" cy="11.7" r="3.7199999999999998" fill="#fff"/><circle cx="308.05" cy="10.2" r="4.5" fill="#fff"/><circle cx="310.85" cy="12.6" r="3.3000000000000003" fill="#fff"/><ellipse cx="330" cy="37.575" rx="6.5" ry="2.6999999999999997" fill="#fff"/><circle cx="327.4" cy="35.775" r="2.79" fill="#fff"/><circle cx="330.975" cy="34.65" r="3.375" fill="#fff"/><circle cx="333.575" cy="36.45" r="2.475" fill="#fff"/><ellipse cx="243" cy="43.75" rx="5.0" ry="3.0" fill="#fff"/><circle cx="241.0" cy="41.75" r="3.1" fill="#fff"/><circle cx="243.75" cy="40.5" r="3.75" fill="#fff"/><circle cx="245.75" cy="42.5" r="2.75" fill="#fff"/><ellipse cx="-8" cy="41.575" rx="6.0" ry="2.6999999999999997" fill="#fff"/><circle cx="-10.4" cy="39.775" r="2.79" fill="#fff"/><circle cx="-7.1" cy="38.65" r="3.375" fill="#fff"/><circle cx="-4.699999999999999" cy="40.45" r="2.475" fill="#fff"/><polygon points="14,106 52,62 69,62 112,106" fill="#a2e0a3"/><polygon points="84,100 127.7,53.6 147,53.6 192,100" fill="#a2e0a3"/><polygon points="228,100 263,62 281,62 312,100" fill="#a2e0a3"/><polygon points="322,82 346,52 390,52 390,110 322,110" fill="#a2e0a3"/><rect x="54.8" y="59.5" width="2.4" height="3" fill="#a2e0a3" rx="1"/><rect x="59.8" y="59.5" width="2.4" height="3" fill="#a2e0a3" rx="1"/><rect x="64.8" y="59.5" width="2.4" height="3" fill="#a2e0a3" rx="1"/><rect x="264.8" y="59.5" width="2.4" height="3" fill="#a2e0a3" rx="1"/><rect x="269.8" y="59.5" width="2.4" height="3" fill="#a2e0a3" rx="1"/><rect x="274.8" y="59.5" width="2.4" height="3" fill="#a2e0a3" rx="1"/><polygon points="-24,75 6,45 21.5,45 44,106 -24,106" fill="#7dd67e"/><polygon points="-40,88 14,90 29,100.4 34,100.4 47.5,89.4 51.3,89.4 59.5,97.2 67,97.2 78.5,86.5 101,69 126,89 141,89 146,94 155.6,94 181,68 198,68 222,92 280,92 300,72 311,67.5 322,82 340,60 390,60 390,112 -40,112" fill="#75d275"/><circle cx="49.4" cy="87.6" r="2.8" fill="#75d275"/><circle cx="184" cy="66.5" r="2.6" fill="#75d275"/><circle cx="193" cy="64.5" r="2.6" fill="#75d275"/><circle cx="311" cy="65" r="2.8" fill="#75d275"/><rect x="211.8" y="88.5" width="2.4" height="4" fill="#75d275" rx="1"/><rect x="216.8" y="88.5" width="2.4" height="4" fill="#75d275" rx="1"/><rect x="221.8" y="88.5" width="2.4" height="4" fill="#75d275" rx="1"/><rect x="-40" y="100" width="430" height="10" fill="#75d275"/><path d="M13 137.6 V108.1 q7.0 -2.8 14.0 0 q7.0 2.8 14.0 0 q7.0 -2.8 14.0 0 q7.0 2.8 14.0 0 q7.0 -2.8 14.0 0 q7.0 2.8 14.0 0 q7.0 -2.8 14.0 0 q7.0 2.8 14.0 0 q7.0 -2.8 14.0 0 q7.0 2.8 14.0 0 q7.0 -2.8 14.0 0 q7.0 2.8 14.0 0 q7.0 -2.8 14.0 0 V137.6Z" fill="#97eff6"/><path d="M13 137.6 V110.6 q7.0 -2.8 14.0 0 q7.0 2.8 14.0 0 q7.0 -2.8 14.0 0 q7.0 2.8 14.0 0 q7.0 -2.8 14.0 0 q7.0 2.8 14.0 0 q7.0 -2.8 14.0 0 q7.0 2.8 14.0 0 q7.0 -2.8 14.0 0 q7.0 2.8 14.0 0 q7.0 -2.8 14.0 0 q7.0 2.8 14.0 0 q7.0 -2.8 14.0 0 V137.6Z" fill="#8de9f5"/><path d="M13 137.6 V115 q7.0 -2.6 14.0 0 q7.0 2.6 14.0 0 q7.0 -2.6 14.0 0 q7.0 2.6 14.0 0 q7.0 -2.6 14.0 0 q7.0 2.6 14.0 0 q7.0 -2.6 14.0 0 q7.0 2.6 14.0 0 q7.0 -2.6 14.0 0 q7.0 2.6 14.0 0 q7.0 -2.6 14.0 0 q7.0 2.6 14.0 0 q7.0 -2.6 14.0 0 V137.6Z" fill="#4fc2ef"/><rect x="13" y="124" width="172" height="13.6" fill="#47b9ec"/><rect x="233" y="86" width="2.5" height="7" fill="#a9784e"/><circle cx="234.5" cy="80" r="9" fill="#3fc74b"/><circle cx="231.5" cy="78" r="5" fill="#56d95c"/><rect x="80.55" y="25.25" width="10.5" height="10.5" rx="2" fill="#fbc532" stroke="#f59a1c" stroke-width="0.9"/><rect x="82.14999999999999" y="27.25" width="7.3" height="6.5" rx="1" fill="#fde27a"/><rect x="-3.25" y="52.75" width="7.5" height="10.5" rx="2" fill="#fbc532" stroke="#f59a1c" stroke-width="0.9"/><rect x="-1.65" y="54.75" width="4.3" height="6.5" rx="1" fill="#fde27a"/><rect x="195.25" y="77.75" width="7.5" height="10.5" rx="2" fill="#fbc532" stroke="#f59a1c" stroke-width="0.9"/><rect x="196.85" y="79.75" width="4.3" height="6.5" rx="1" fill="#fde27a"/><rect x="223.75" y="77.75" width="7.5" height="10.5" rx="2" fill="#fbc532" stroke="#f59a1c" stroke-width="0.9"/><rect x="225.35" y="79.75" width="4.3" height="6.5" rx="1" fill="#fde27a"/><rect x="-25" y="78" width="39" height="19.5" fill="#2fc24a"/><rect x="-25" y="78" width="39" height="7.35" fill="#55e05a"/><rect x="-25" y="78" width="39" height="1.2" fill="#7bee6e"/><path d="M-25 140.5 V95.5 q3.25 2.6 6.5 0 q3.25 2.6 6.5 0 q3.25 2.6 6.5 0 q3.25 2.6 6.5 0 q3.25 2.6 6.5 0 q3.25 2.6 6.5 0 V140.5Z" fill="#a9784e"/><rect x="71" y="50" width="28.7" height="19" fill="#2fc24a"/><rect x="71" y="50" width="28.7" height="7.14" fill="#55e05a"/><rect x="71" y="50" width="28.7" height="1.2" fill="#7bee6e"/><path d="M71 78 V67 q3.5875 2.6 7.175 0 q3.5875 2.6 7.175 0 q3.5875 2.6 7.175 0 q3.5875 2.6 7.175 0 V78Z" fill="#a9784e"/><rect x="213.4" y="22" width="28.7" height="17" fill="#2fc24a"/><rect x="213.4" y="22" width="28.7" height="6.3" fill="#55e05a"/><rect x="213.4" y="22" width="28.7" height="1.2" fill="#7bee6e"/><path d="M213.4 49.5 V37 q3.5875 2.6 7.175 0 q3.5875 2.6 7.175 0 q3.5875 2.6 7.175 0 q3.5875 2.6 7.175 0 V49.5Z" fill="#a9784e"/><rect x="185" y="106.6" width="210" height="18.8" fill="#2fc24a"/><rect x="185" y="106.6" width="210" height="7.056" fill="#55e05a"/><rect x="185" y="106.6" width="210" height="1.2" fill="#7bee6e"/><path d="M185 139.39999999999998 V123.39999999999999 q3.5 2.6 7.0 0 q3.5 2.6 7.0 0 q3.5 2.6 7.0 0 q3.5 2.6 7.0 0 q3.5 2.6 7.0 0 q3.5 2.6 7.0 0 q3.5 2.6 7.0 0 q3.5 2.6 7.0 0 q3.5 2.6 7.0 0 q3.5 2.6 7.0 0 q3.5 2.6 7.0 0 q3.5 2.6 7.0 0 q3.5 2.6 7.0 0 q3.5 2.6 7.0 0 q3.5 2.6 7.0 0 q3.5 2.6 7.0 0 q3.5 2.6 7.0 0 q3.5 2.6 7.0 0 q3.5 2.6 7.0 0 q3.5 2.6 7.0 0 q3.5 2.6 7.0 0 q3.5 2.6 7.0 0 q3.5 2.6 7.0 0 q3.5 2.6 7.0 0 q3.5 2.6 7.0 0 q3.5 2.6 7.0 0 q3.5 2.6 7.0 0 q3.5 2.6 7.0 0 q3.5 2.6 7.0 0 q3.5 2.6 7.0 0 V139.39999999999998Z" fill="#a9784e"/><polygon points="75.5,78 82.5,78 79,87.5" fill="#8a8f98"/><polygon points="87.5,78 94.5,78 91,87.5" fill="#8a8f98"/><polygon points="79,78 82.5,78 79,87.5" fill="#5f646e"/><polygon points="91,78 94.5,78 91,87.5" fill="#5f646e"/><path d="M77 50 L78.5 44 L80 50 M80 50 L83 42.5 L83.5 50 M83 50 L86.5 44 L86 50" fill="#2fae3e" stroke="#2fae3e" stroke-width="0.6"/><ellipse cx="76.5" cy="42.2" rx="3.4" ry="1.5" fill="#f7c12e"/><circle cx="76.8" cy="40.8" r="1" fill="#e8483a"/></g></defs><use href="#w"/></svg>
<div style="left:288.7px;top:32px;width:1.4px;height:446px;background:#202020;"></div>
<div style="left:290.1px;top:32px;width:659px;height:12px;background:#282828;"></div>
<div style="left:290.1px;top:32px;width:59.4px;height:12px;background:#383838;"></div>
<svg style="left:290px;top:31px;" width="60" height="3" viewBox="0 0 60 3"><rect x="0.1" y="0.5" width="59.4" height="1.6" fill="#3a72b0"/></svg>
<svg style="left:296px;top:35px;" width="6" height="6" viewBox="0 0 6 6"><circle cx="3" cy="3" r="3" fill="#d0d0d0"/><rect x="2.5" y="2.6" width="1" height="2.2" fill="#383838"/><rect x="2.5" y="1.1" width="1" height="1" fill="#383838"/></svg>
<span style="left:305px;top:33px;color:#c4c4c4;font-size:8.5px;font-weight:400;transform:scaleX(0.964);transform-origin:0 0;">Inspector</span>
<svg style="left:354.5px;top:34px;" width="8" height="8" viewBox="0 0 8 8"><path d="M3.5 0.2 L4.3 0.2 L4.6 1.2 L5.4 1.6 L6.3 1.1 L6.9 1.7 L6.4 2.6 L6.8 3.4 L7.8 3.7 V4.3 L6.8 4.6 L6.4 5.4 L6.9 6.3 L6.3 6.9 L5.4 6.4 L4.6 6.8 L4.3 7.8 H3.7 L3.4 6.8 L2.6 6.4 L1.7 6.9 L1.1 6.3 L1.6 5.4 L1.2 4.6 L0.2 4.3 V3.7 L1.2 3.4 L1.6 2.6 L1.1 1.7 L1.7 1.1 L2.6 1.6 L3.4 1.2Z" fill="#d0d0d0"/><circle cx="4" cy="4" r="1.5" fill="#282828"/></svg>
<span style="left:364.8px;top:33px;color:#c4c4c4;font-size:8.5px;font-weight:400;transform:scaleX(0.954);transform-origin:0 0;">Project Settings</span>
<svg style="left:929.3px;top:33.8px;" width="6.4" height="6.6" viewBox="0 0 6.4 6.6"><path d="M5.2 3 V1.9 A1.4 1.4 0 0 0 3.8 0.5 H1.6" fill="none" stroke="#c8c8c8" stroke-width="0.9"/><rect x="0.5" y="3" width="5.4" height="3" rx="0.9" fill="none" stroke="#c8c8c8" stroke-width="0.9"/></svg>
<svg style="left:942.3px;top:34.4px;" width="2" height="7" viewBox="0 0 2 7"><rect x="0.5" y="0" width="1" height="1.2" fill="#c4c4c4"/><rect x="0.5" y="2.8" width="1" height="1.2" fill="#c4c4c4"/><rect x="0.5" y="5.6" width="1" height="1.2" fill="#c4c4c4"/></svg>
<svg style="left:294px;top:50px;" width="13" height="13.5" viewBox="0 0 13 13.5"><path d="M6.5 0.8 L11.9 3.4 V9.8 L6.5 12.6 L1.1 9.8 V3.4Z M1.1 3.4 L6.5 6.2 L11.9 3.4 M6.5 6.2 V12.6" fill="none" stroke="#d0d0d0" stroke-width="0.9" stroke-linejoin="round"/></svg>
<svg style="left:306.8px;top:63.3px;" width="4.4" height="2.6" viewBox="0 0 4.4 2.6"><polygon points="0,0 4.4,0 2.2,2.6" fill="#d8d8d8"/></svg>
<svg style="left:318.5px;top:50.5px;" width="9" height="9" viewBox="0 0 9 9"><rect x="0.4" y="0.4" width="8.2" height="8.2" rx="1.2" fill="#242424" stroke="#1a1a1a" stroke-width="0.8"/><path d="M2.2 4.6 L3.8 6.2 L6.9 2.6" fill="none" stroke="#f0f0f0" stroke-width="1.1"/></svg>
<div class="f" style="left:331px;top:49.5px;width:569.5px;height:11px"></div>
<span style="left:333.2px;top:50px;color:#e4e4e4;font-size:8.5px;font-weight:400;transform:scaleX(0.961);transform-origin:0 0;">Main Camera</span>
<svg style="left:903px;top:50.5px;" width="9" height="9" viewBox="0 0 9 9"><rect x="0.4" y="0.4" width="8.2" height="8.2" rx="1.2" fill="#242424" stroke="#1a1a1a" stroke-width="0.8"/></svg>
<span style="left:914.4px;top:50px;color:#c4c4c4;font-size:8.5px;font-weight:400;transform:scaleX(0.946);transform-origin:0 0;">Static</span>
<svg style="left:942.4px;top:54.5px;" width="4.2" height="2.6" viewBox="0 0 4.2 2.6"><polygon points="0,0 4.2,0 2.1,2.6" fill="#d8d8d8"/></svg>
<span style="left:316.4px;top:65px;color:#c4c4c4;font-size:8.5px;font-weight:400;transform:scaleX(0.963);transform-origin:0 0;">Tag</span>
<div class="d" style="left:333px;top:64.5px;width:296px;height:10.5px"></div>
<span style="left:335.6px;top:65px;color:#e4e4e4;font-size:8.5px;font-weight:400;transform:scaleX(0.936);transform-origin:0 0;">Untagged</span>
<svg style="left:620.2px;top:68.6px;" width="4.6" height="2.8" viewBox="0 0 4.6 2.8"><polygon points="0,0 4.6,0 2.3,2.8" fill="#d8d8d8"/></svg>
<span style="left:637.3px;top:65px;color:#c4c4c4;font-size:8.5px;font-weight:400;transform:scaleX(0.927);transform-origin:0 0;">Layer</span>
<div class="d" style="left:660.5px;top:64.5px;width:290px;height:10.5px"></div>
<span style="left:663px;top:65px;color:#e4e4e4;font-size:8.5px;font-weight:400;transform:scaleX(0.932);transform-origin:0 0;">Default</span>
<svg style="left:941.2px;top:68.6px;" width="4.6" height="2.8" viewBox="0 0 4.6 2.8"><polygon points="0,0 4.6,0 2.3,2.8" fill="#d8d8d8"/></svg>
<div style="left:290.1px;top:80px;width:659px;height:1px;background:#222222;"></div>
<div style="left:290.1px;top:81px;width:659px;height:13px;background:#3e3e3e;"></div>
<div style="left:290.1px;top:94px;width:659px;height:0.8px;background:#303030;"></div>
<svg style="left:294.0px;top:85.89999999999999px;" width="5.4" height="3.8" viewBox="0 0 5.4 3.8"><polygon points="0,0 5.4,0 2.7,3.8" fill="#757575"/></svg>
<svg style="left:915.5px;top:84.5px;" width="6" height="6" viewBox="0 0 6 6"><circle cx="3" cy="3" r="2.9" fill="#d8d8d8"/><path d="M2.1 2.3 A0.9 0.9 0 1 1 3 3.2 V3.8" stroke="#3e3e3e" stroke-width="0.8" fill="none"/><rect x="2.6" y="4.3" width="0.8" height="0.8" fill="#3e3e3e"/></svg>
<svg style="left:928px;top:84.5px;" width="6.4" height="6" viewBox="0 0 6.4 6"><path d="M0 1.6H6.4M0 4.4H6.4" stroke="#a8a8a8" stroke-width="0.6"/><rect x="3.6" y="0.5" width="1.2" height="2.2" fill="#c4c4c4"/><rect x="1.5" y="3.3" width="1.2" height="2.2" fill="#c4c4c4"/></svg>
<svg style="left:942.9px;top:84.1px;" width="2" height="7" viewBox="0 0 2 7"><rect x="0.5" y="0" width="1" height="1.2" fill="#c4c4c4"/><rect x="0.5" y="2.8" width="1" height="1.2" fill="#c4c4c4"/><rect x="0.5" y="5.6" width="1" height="1.2" fill="#c4c4c4"/></svg>
<svg style="left:303.5px;top:83px;" width="9" height="9" viewBox="0 0 9 9"><g stroke-linecap="round"><path d="M4.5 4.2 V1.2" stroke="#8fdc4c" stroke-width="1.7"/><path d="M3.9 5.6 L1.5 7.2" stroke="#3fc1ee" stroke-width="1.7"/><path d="M5.1 5.6 L7.5 7.2" stroke="#ee7430" stroke-width="1.7"/></g></svg>
<span style="left:328px;top:83px;color:#e0e0e0;font-size:8.5px;font-weight:700;transform:scaleX(0.924);transform-origin:0 0;">Transform</span>
<span style="left:302.3px;top:98px;color:#c4c4c4;font-size:8.5px;font-weight:400;transform:scaleX(0.949);transform-origin:0 0;">Position</span>
<span style="left:576.6px;top:98px;color:#c4c4c4;font-size:8.5px;font-weight:400;transform:scaleX(0.953);transform-origin:0 0;">X</span>
<div class="f" style="left:585.5px;top:97.8px;width:113.5px;height:10.6px"></div>
<span style="left:587.7px;top:98px;color:#d8d8d8;font-size:8.5px;font-weight:400;transform:scaleX(0.953);transform-origin:0 0;">0</span>
<span style="left:702.7px;top:98px;color:#c4c4c4;font-size:8.5px;font-weight:400;transform:scaleX(0.953);transform-origin:0 0;">Y</span>
<div class="f" style="left:711px;top:97.8px;width:113px;height:10.6px"></div>
<span style="left:713.2px;top:98px;color:#d8d8d8;font-size:8.5px;font-weight:400;transform:scaleX(0.953);transform-origin:0 0;">0</span>
<span style="left:828.3px;top:98px;color:#c4c4c4;font-size:8.5px;font-weight:400;transform:scaleX(0.953);transform-origin:0 0;">Z</span>
<div class="f" style="left:836.5px;top:97.8px;width:114px;height:10.6px"></div>
<span style="left:838.7px;top:98px;color:#d8d8d8;font-size:8.5px;font-weight:400;transform:scaleX(0.953);transform-origin:0 0;">-10</span>
<span style="left:302.3px;top:111px;color:#c4c4c4;font-size:8.5px;font-weight:400;transform:scaleX(0.932);transform-origin:0 0;">Rotation</span>
<span style="left:576.6px;top:111px;color:#c4c4c4;font-size:8.5px;font-weight:400;transform:scaleX(0.953);transform-origin:0 0;">X</span>
<div class="f" style="left:585.5px;top:110.4px;width:113.5px;height:10.6px"></div>
<span style="left:587.7px;top:111px;color:#d8d8d8;font-size:8.5px;font-weight:400;transform:scaleX(0.953);transform-origin:0 0;">0</span>
<span style="left:702.7px;top:111px;color:#c4c4c4;font-size:8.5px;font-weight:400;transform:scaleX(0.953);transform-origin:0 0;">Y</span>
<div class="f" style="left:711px;top:110.4px;width:113px;height:10.6px"></div>
<span style="left:713.2px;top:111px;color:#d8d8d8;font-size:8.5px;font-weight:400;transform:scaleX(0.953);transform-origin:0 0;">0</span>
<span style="left:828.3px;top:111px;color:#c4c4c4;font-size:8.5px;font-weight:400;transform:scaleX(0.953);transform-origin:0 0;">Z</span>
<div class="f" style="left:836.5px;top:110.4px;width:114px;height:10.6px"></div>
<span style="left:838.7px;top:111px;color:#d8d8d8;font-size:8.5px;font-weight:400;transform:scaleX(0.953);transform-origin:0 0;">0</span>
<span style="left:302.3px;top:123px;color:#c4c4c4;font-size:8.5px;font-weight:400;transform:scaleX(0.936);transform-origin:0 0;">Scale</span>
<span style="left:576.6px;top:123px;color:#c4c4c4;font-size:8.5px;font-weight:400;transform:scaleX(0.953);transform-origin:0 0;">X</span>
<div class="f" style="left:585.5px;top:122.60000000000001px;width:113.5px;height:10.6px"></div>
<span style="left:587.7px;top:123px;color:#d8d8d8;font-size:8.5px;font-weight:400;transform:scaleX(0.953);transform-origin:0 0;">1</span>
<span style="left:702.7px;top:123px;color:#c4c4c4;font-size:8.5px;font-weight:400;transform:scaleX(0.953);transform-origin:0 0;">Y</span>
<div class="f" style="left:711px;top:122.60000000000001px;width:113px;height:10.6px"></div>
<span style="left:713.2px;top:123px;color:#d8d8d8;font-size:8.5px;font-weight:400;transform:scaleX(0.953);transform-origin:0 0;">1</span>
<span style="left:828.3px;top:123px;color:#c4c4c4;font-size:8.5px;font-weight:400;transform:scaleX(0.953);transform-origin:0 0;">Z</span>
<div class="f" style="left:836.5px;top:122.60000000000001px;width:114px;height:10.6px"></div>
<span style="left:838.7px;top:123px;color:#d8d8d8;font-size:8.5px;font-weight:400;transform:scaleX(0.953);transform-origin:0 0;">1</span>
<svg style="left:562px;top:124.5px;" width="8" height="7" viewBox="0 0 8 7"><path d="M3.2 2.2 H2.2 A1.3 1.3 0 0 0 2.2 4.8 H3.2 M4.8 2.2 H5.8 A1.3 1.3 0 0 1 5.8 4.8 H4.8" fill="none" stroke="#c4c4c4" stroke-width="0.8"/><path d="M1 0.6 L7 6.4" stroke="#c4c4c4" stroke-width="0.7"/></svg>
<div style="left:290.1px;top:139px;width:659px;height:1px;background:#222222;"></div>
<div style="left:290.1px;top:140px;width:659px;height:13px;background:#3e3e3e;"></div>
<div style="left:290.1px;top:153px;width:659px;height:0.8px;background:#303030;"></div>
<svg style="left:294.0px;top:144.9px;" width="5.4" height="3.8" viewBox="0 0 5.4 3.8"><polygon points="0,0 5.4,0 2.7,3.8" fill="#757575"/></svg>
<svg style="left:915.5px;top:143.5px;" width="6" height="6" viewBox="0 0 6 6"><circle cx="3" cy="3" r="2.9" fill="#d8d8d8"/><path d="M2.1 2.3 A0.9 0.9 0 1 1 3 3.2 V3.8" stroke="#3e3e3e" stroke-width="0.8" fill="none"/><rect x="2.6" y="4.3" width="0.8" height="0.8" fill="#3e3e3e"/></svg>
<svg style="left:928px;top:143.5px;" width="6.4" height="6" viewBox="0 0 6.4 6"><path d="M0 1.6H6.4M0 4.4H6.4" stroke="#a8a8a8" stroke-width="0.6"/><rect x="3.6" y="0.5" width="1.2" height="2.2" fill="#c4c4c4"/><rect x="1.5" y="3.3" width="1.2" height="2.2" fill="#c4c4c4"/></svg>
<svg style="left:942.9px;top:143.1px;" width="2" height="7" viewBox="0 0 2 7"><rect x="0.5" y="0" width="1" height="1.2" fill="#c4c4c4"/><rect x="0.5" y="2.8" width="1" height="1.2" fill="#c4c4c4"/><rect x="0.5" y="5.6" width="1" height="1.2" fill="#c4c4c4"/></svg>
<svg style="left:304px;top:143.3px;" width="9" height="6.5" viewBox="0 0 9 6.5"><rect x="0" y="0.3" width="6" height="5.6" rx="0.8" fill="#5fd0f0"/><polygon points="6.6,2 8.8,0.5 8.8,5.7 6.6,4.2" fill="#5fd0f0"/></svg>
<svg style="left:315.3px;top:141.8px;" width="9" height="9" viewBox="0 0 9 9"><rect x="0.4" y="0.4" width="8.2" height="8.2" rx="1.2" fill="#242424" stroke="#1a1a1a" stroke-width="0.8"/><path d="M2.2 4.6 L3.8 6.2 L6.9 2.6" fill="none" stroke="#f0f0f0" stroke-width="1.1"/></svg>
<span style="left:328px;top:142px;color:#4fb3e8;font-size:8.5px;font-weight:700;transform:scaleX(0.907);transform-origin:0 0;">Camera</span>
<span style="left:302.3px;top:156px;color:#c4c4c4;font-size:8.5px;font-weight:400;transform:scaleX(0.932);transform-origin:0 0;">Clear Flags</span>
<div class="d" style="left:576.5px;top:156.3px;width:373.5px;height:10.2px"></div>
<span style="left:578.7px;top:156px;color:#e4e4e4;font-size:8.5px;font-weight:400;transform:scaleX(0.958);transform-origin:0 0;">Skybox</span>
<svg style="left:941.2px;top:160.3px;" width="4.6" height="2.8" viewBox="0 0 4.6 2.8"><polygon points="0,0 4.6,0 2.3,2.8" fill="#d8d8d8"/></svg>
<span style="left:302.3px;top:169px;color:#c4c4c4;font-size:8.5px;font-weight:400;transform:scaleX(0.957);transform-origin:0 0;">Background</span>
<div style="left:576.5px;top:168.5px;width:362.5px;height:8.4px;background:#2f4f83;border-radius:1px 1px 0 0"></div>
<div style="left:576.5px;top:176.8px;width:362.5px;height:1.9px;background:#060606;"></div>
<svg style="left:940px;top:169.5px;" width="8" height="8" viewBox="0 0 8 8"><path d="M1 7 L1.4 5.4 L4.8 2 L6 3.2 L2.6 6.6Z" fill="#d0d0d0"/><path d="M4.6 1.4 L6.6 3.4" stroke="#d0d0d0" stroke-width="1.2"/><path d="M5.6 2.2 L7 0.8" stroke="#d0d0d0" stroke-width="1.6" stroke-linecap="round"/></svg>
<span style="left:302.3px;top:181px;color:#c4c4c4;font-size:8.5px;font-weight:400;transform:scaleX(0.950);transform-origin:0 0;">Culling Mask</span>
<div class="d" style="left:576.5px;top:181.20000000000002px;width:373.5px;height:10.2px"></div>
<span style="left:578.7px;top:181px;color:#e4e4e4;font-size:8.5px;font-weight:400;transform:scaleX(0.954);transform-origin:0 0;">Everything</span>
<svg style="left:941.2px;top:185.20000000000002px;" width="4.6" height="2.8" viewBox="0 0 4.6 2.8"><polygon points="0,0 4.6,0 2.3,2.8" fill="#d8d8d8"/></svg>
<span style="left:302.3px;top:199px;color:#c4c4c4;font-size:8.5px;font-weight:400;transform:scaleX(0.958);transform-origin:0 0;">Projection</span>
<div class="d" style="left:576.5px;top:198.70000000000002px;width:373.5px;height:10.2px"></div>
<span style="left:578.7px;top:199px;color:#e4e4e4;font-size:8.5px;font-weight:400;transform:scaleX(0.957);transform-origin:0 0;">Perspective</span>
<svg style="left:941.2px;top:202.70000000000002px;" width="4.6" height="2.8" viewBox="0 0 4.6 2.8"><polygon points="0,0 4.6,0 2.3,2.8" fill="#d8d8d8"/></svg>
<span style="left:302.3px;top:211px;color:#c4c4c4;font-size:8.5px;font-weight:400;transform:scaleX(0.901);transform-origin:0 0;">FOV Axis</span>
<div class="d" style="left:576.5px;top:211.20000000000002px;width:373.5px;height:10.2px"></div>
<span style="left:578.7px;top:211px;color:#e4e4e4;font-size:8.5px;font-weight:400;transform:scaleX(0.969);transform-origin:0 0;">Vertical</span>
<svg style="left:941.2px;top:215.20000000000002px;" width="4.6" height="2.8" viewBox="0 0 4.6 2.8"><polygon points="0,0 4.6,0 2.3,2.8" fill="#d8d8d8"/></svg>
<span style="left:302.3px;top:224px;color:#c4c4c4;font-size:8.5px;font-weight:400;transform:scaleX(0.946);transform-origin:0 0;">Field of View</span>
<div style="left:576.5px;top:228.2px;width:336.5px;height:1px;background:#5e5e5e;"></div>
<div style="left:686.8px;top:225.5px;width:6px;height:6px;background:#999999;border-radius:3px"></div>
<div class="f" style="left:917px;top:223.5px;width:33px;height:10.6px"></div>
<span style="left:919.5px;top:224px;color:#d8d8d8;font-size:8.5px;font-weight:400;transform:scaleX(0.953);transform-origin:0 0;">60</span>
<span style="left:302.3px;top:236px;color:#c4c4c4;font-size:8.5px;font-weight:400;transform:scaleX(0.948);transform-origin:0 0;">Physical Camera</span>
<svg style="left:576px;top:237px;" width="9" height="9" viewBox="0 0 9 9"><rect x="0.4" y="0.4" width="8.2" height="8.2" rx="1.2" fill="#242424" stroke="#1a1a1a" stroke-width="0.8"/></svg>
<span style="left:302.3px;top:254px;color:#c4c4c4;font-size:8.5px;font-weight:400;transform:scaleX(0.946);transform-origin:0 0;">Clipping Planes</span>
<span style="left:576.6px;top:254px;color:#c4c4c4;font-size:8.5px;font-weight:400;transform:scaleX(0.953);transform-origin:0 0;">Near</span>
<div class="f" style="left:598.8px;top:253.7px;width:351.2px;height:10.6px"></div>
<span style="left:601.0px;top:254px;color:#d8d8d8;font-size:8.5px;font-weight:400;transform:scaleX(0.953);transform-origin:0 0;">0.3</span>
<span style="left:576.6px;top:266px;color:#c4c4c4;font-size:8.5px;font-weight:400;transform:scaleX(0.953);transform-origin:0 0;">Far</span>
<div class="f" style="left:598.8px;top:266.2px;width:351.2px;height:10.6px"></div>
<span style="left:601.0px;top:266px;color:#d8d8d8;font-size:8.5px;font-weight:400;transform:scaleX(0.953);transform-origin:0 0;">1000</span>
<span style="left:302.3px;top:279px;color:#c4c4c4;font-size:8.5px;font-weight:400;transform:scaleX(0.957);transform-origin:0 0;">Viewport Rect</span>
<span style="left:576.6px;top:279px;color:#c4c4c4;font-size:8.5px;font-weight:400;transform:scaleX(0.953);transform-origin:0 0;">X</span>
<div class="f" style="left:585.5px;top:278.8px;width:113.5px;height:10.6px"></div>
<span style="left:587.7px;top:279px;color:#d8d8d8;font-size:8.5px;font-weight:400;transform:scaleX(0.953);transform-origin:0 0;">0</span>
<span style="left:702.7px;top:279px;color:#c4c4c4;font-size:8.5px;font-weight:400;transform:scaleX(0.953);transform-origin:0 0;">Y</span>
<div class="f" style="left:711px;top:278.8px;width:113px;height:10.6px"></div>
<span style="left:713.2px;top:279px;color:#d8d8d8;font-size:8.5px;font-weight:400;transform:scaleX(0.953);transform-origin:0 0;">0</span>
<span style="left:576.6px;top:292px;color:#c4c4c4;font-size:8.5px;font-weight:400;transform:scaleX(0.953);transform-origin:0 0;">W</span>
<div class="f" style="left:585.5px;top:291.3px;width:113.5px;height:10.6px"></div>
<span style="left:587.7px;top:292px;color:#d8d8d8;font-size:8.5px;font-weight:400;transform:scaleX(0.953);transform-origin:0 0;">1</span>
<span style="left:702.7px;top:292px;color:#c4c4c4;font-size:8.5px;font-weight:400;transform:scaleX(0.953);transform-origin:0 0;">H</span>
<div class="f" style="left:711px;top:291.3px;width:113px;height:10.6px"></div>
<span style="left:713.2px;top:292px;color:#d8d8d8;font-size:8.5px;font-weight:400;transform:scaleX(0.953);transform-origin:0 0;">1</span>
<span style="left:302.3px;top:309px;color:#c4c4c4;font-size:8.5px;font-weight:400;transform:scaleX(0.939);transform-origin:0 0;">Depth</span>
<div class="f" style="left:576.5px;top:308.8px;width:373.5px;height:10.6px"></div>
<span style="left:578.7px;top:309px;color:#d8d8d8;font-size:8.5px;font-weight:400;transform:scaleX(0.953);transform-origin:0 0;">-1</span>
<span style="left:302.3px;top:322px;color:#c4c4c4;font-size:8.5px;font-weight:400;transform:scaleX(0.928);transform-origin:0 0;">Rendering Path</span>
<div class="d" style="left:576.5px;top:321.5px;width:373.5px;height:10.2px"></div>
<span style="left:578.7px;top:322px;color:#e4e4e4;font-size:8.5px;font-weight:400;transform:scaleX(0.934);transform-origin:0 0;">Use Graphics Settings</span>
<svg style="left:941.2px;top:325.50000000000006px;" width="4.6" height="2.8" viewBox="0 0 4.6 2.8"><polygon points="0,0 4.6,0 2.3,2.8" fill="#d8d8d8"/></svg>
<span style="left:302.3px;top:334px;color:#c4c4c4;font-size:8.5px;font-weight:400;transform:scaleX(0.983);transform-origin:0 0;">Target Texture</span>
<div class="f" style="left:576.5px;top:333.8px;width:373.5px;height:10.6px"></div>
<span style="left:578.7px;top:334px;color:#d8d8d8;font-size:8.5px;font-weight:400;transform:scaleX(0.934);transform-origin:0 0;">None (Render Texture)</span>
<svg style="left:939.5px;top:335.6px;" width="7" height="7" viewBox="0 0 7 7"><circle cx="3.5" cy="3.5" r="2.9" fill="none" stroke="#c4c4c4" stroke-width="0.7"/><circle cx="3.5" cy="3.5" r="1.1" fill="#c4c4c4"/></svg>
<span style="left:302.3px;top:347px;color:#c4c4c4;font-size:8.5px;font-weight:400;transform:scaleX(0.959);transform-origin:0 0;">Occlusion Culling</span>
<svg style="left:576px;top:347.1px;" width="9" height="9" viewBox="0 0 9 9"><rect x="0.4" y="0.4" width="8.2" height="8.2" rx="1.2" fill="#242424" stroke="#1a1a1a" stroke-width="0.8"/><path d="M2.2 4.6 L3.8 6.2 L6.9 2.6" fill="none" stroke="#f0f0f0" stroke-width="1.1"/></svg>
<span style="left:302.3px;top:359px;color:#c4c4c4;font-size:8.5px;font-weight:400;transform:scaleX(0.869);transform-origin:0 0;">HDR</span>
<div class="d" style="left:576.5px;top:359.0px;width:373.5px;height:10.2px"></div>
<span style="left:578.7px;top:359px;color:#e4e4e4;font-size:8.5px;font-weight:400;transform:scaleX(0.934);transform-origin:0 0;">Use Graphics Settings</span>
<svg style="left:941.2px;top:363.00000000000006px;" width="4.6" height="2.8" viewBox="0 0 4.6 2.8"><polygon points="0,0 4.6,0 2.3,2.8" fill="#d8d8d8"/></svg>
<span style="left:302.3px;top:372px;color:#c4c4c4;font-size:8.5px;font-weight:400;transform:scaleX(0.917);transform-origin:0 0;">MSAA</span>
<div class="d" style="left:576.5px;top:371.5px;width:373.5px;height:10.2px"></div>
<span style="left:578.7px;top:372px;color:#e4e4e4;font-size:8.5px;font-weight:400;transform:scaleX(0.934);transform-origin:0 0;">Use Graphics Settings</span>
<svg style="left:941.2px;top:375.50000000000006px;" width="4.6" height="2.8" viewBox="0 0 4.6 2.8"><polygon points="0,0 4.6,0 2.3,2.8" fill="#d8d8d8"/></svg>
<span style="left:302.3px;top:384px;color:#c4c4c4;font-size:8.5px;font-weight:400;transform:scaleX(0.958);transform-origin:0 0;">Allow Dynamic Resolution</span>
<svg style="left:576px;top:384.6px;" width="9" height="9" viewBox="0 0 9 9"><rect x="0.4" y="0.4" width="8.2" height="8.2" rx="1.2" fill="#242424" stroke="#1a1a1a" stroke-width="0.8"/></svg>
<span style="left:302.3px;top:402px;color:#c4c4c4;font-size:8.5px;font-weight:400;transform:scaleX(0.966);transform-origin:0 0;">Target Display</span>
<div class="d" style="left:576.5px;top:401.5px;width:373.5px;height:10.2px"></div>
<span style="left:578.7px;top:402px;color:#e4e4e4;font-size:8.5px;font-weight:400;transform:scaleX(0.927);transform-origin:0 0;">Display 1</span>
<svg style="left:941.2px;top:405.50000000000006px;" width="4.6" height="2.8" viewBox="0 0 4.6 2.8"><polygon points="0,0 4.6,0 2.3,2.8" fill="#d8d8d8"/></svg>
<div style="left:290.1px;top:418px;width:659px;height:1px;background:#222222;"></div>
<div style="left:290.1px;top:419px;width:659px;height:13px;background:#3e3e3e;"></div>
<div style="left:290.1px;top:432px;width:659px;height:0.8px;background:#303030;"></div>
<svg style="left:915.5px;top:422.5px;" width="6" height="6" viewBox="0 0 6 6"><circle cx="3" cy="3" r="2.9" fill="#d8d8d8"/><path d="M2.1 2.3 A0.9 0.9 0 1 1 3 3.2 V3.8" stroke="#3e3e3e" stroke-width="0.8" fill="none"/><rect x="2.6" y="4.3" width="0.8" height="0.8" fill="#3e3e3e"/></svg>
<svg style="left:928px;top:422.5px;" width="6.4" height="6" viewBox="0 0 6.4 6"><path d="M0 1.6H6.4M0 4.4H6.4" stroke="#a8a8a8" stroke-width="0.6"/><rect x="3.6" y="0.5" width="1.2" height="2.2" fill="#c4c4c4"/><rect x="1.5" y="3.3" width="1.2" height="2.2" fill="#c4c4c4"/></svg>
<svg style="left:942.9px;top:422.1px;" width="2" height="7" viewBox="0 0 2 7"><rect x="0.5" y="0" width="1" height="1.2" fill="#c4c4c4"/><rect x="0.5" y="2.8" width="1" height="1.2" fill="#c4c4c4"/><rect x="0.5" y="5.6" width="1" height="1.2" fill="#c4c4c4"/></svg>
<svg style="left:303.5px;top:421.5px;" width="9" height="8.5" viewBox="0 0 9 8.5"><path d="M1.2 6 V4 A3.3 3.3 0 0 1 7.8 4 V6" fill="none" stroke="#f5a21d" stroke-width="1.1"/><rect x="0.6" y="4.6" width="2" height="3.4" rx="0.6" fill="#f5a21d"/><rect x="6.4" y="4.6" width="2" height="3.4" rx="0.6" fill="#f5a21d"/></svg>
<svg style="left:315.3px;top:421px;" width="9" height="9" viewBox="0 0 9 9"><rect x="0.4" y="0.4" width="8.2" height="8.2" rx="1.2" fill="#242424" stroke="#1a1a1a" stroke-width="0.8"/><path d="M2.2 4.6 L3.8 6.2 L6.9 2.6" fill="none" stroke="#f0f0f0" stroke-width="1.1"/></svg>
<span style="left:328px;top:421px;color:#e0e0e0;font-size:8.5px;font-weight:700;transform:scaleX(0.896);transform-origin:0 0;">Audio Listener</span>
<div style="left:549.5px;top:438px;width:142.5px;height:14px;background:#585858;border-radius:2px;border:1px solid #303030"></div>
<span style="left:591.8px;top:440px;color:#e4e4e4;font-size:8.5px;font-weight:400;transform:scaleX(0.933);transform-origin:0 0;">Add Component</span>
<svg style="left:300px;top:193px;" width="649" height="21" viewBox="0 0 649 21"><rect x="2.9" y="3.1" width="642.5" height="14.6" fill="none" stroke="#ee1c25" stroke-width="2.6"/></svg>
<svg style="left:905.5px;top:481px;" width="10" height="10" viewBox="0 0 10 10"><ellipse cx="5" cy="5.4" rx="2.4" ry="3.1" fill="#c8c8c8"/><circle cx="5" cy="2.2" r="1.3" fill="#c8c8c8"/><path d="M1 2.6L3.2 4M9 2.6L6.8 4M0.6 5.6H2.8M9.4 5.6H7.2M1.2 9L3.2 7.2M8.8 9L6.8 7.2" stroke="#c8c8c8" stroke-width="0.8"/><path d="M2 0.6L9.4 9.8" stroke="#191919" stroke-width="2"/><path d="M1.6 1L9 10" stroke="#c8c8c8" stroke-width="0.8"/></svg>
<svg style="left:922.5px;top:481px;" width="10" height="10" viewBox="0 0 10 10"><ellipse cx="4.5" cy="2.2" rx="3.6" ry="1.6" fill="#c8c8c8"/><path d="M0.9 3.4 V4.4 A3.6 1.6 0 0 0 8.1 4.4 V3.4 A3.6 1.6 0 0 1 0.9 3.4Z M0.9 5.8 V7 A3.6 1.6 0 0 0 8.1 7 V5.8 A3.6 1.6 0 0 1 0.9 5.8Z" fill="#c8c8c8"/><path d="M2.4 2.2L9.4 9.8" stroke="#191919" stroke-width="2"/><path d="M2.6 2.8L9.2 10" stroke="#c8c8c8" stroke-width="0.8"/></svg>
<svg style="left:938px;top:481.4px;" width="10" height="10" viewBox="0 0 10 10"><circle cx="4.8" cy="4.8" r="3.9" fill="none" stroke="#bdbdbd" stroke-width="0.9"/><path d="M3 4.9 L4.3 6.2 L6.8 3.4" fill="none" stroke="#e0e0e0" stroke-width="1"/></svg>
</div></body></html>
